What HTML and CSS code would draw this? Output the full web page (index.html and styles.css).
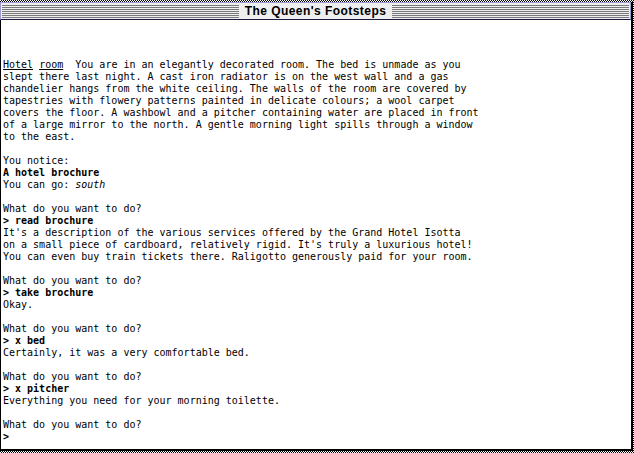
FILE: index.html
```html
<!DOCTYPE html>
<html>
<head>
<meta charset="utf-8">
<title>The Queen's Footsteps</title>
<link rel="stylesheet" href="styles.css">
</head>
<body>
<div class="window">
  <div class="titlebar">
    <div class="stripes"></div>
    <div class="title">The Queen's Footsteps</div>
    <div class="stripes"></div>
  </div>
  <div class="content">
    <div class="notch"></div>
    <pre class="transcript"><span class="u">Hotel</span> <span class="u">room</span>  You are in an elegantly decorated room. The bed is unmade as you
slept there last night. A cast iron radiator is on the west wall and a gas
chandelier hangs from the white ceiling. The walls of the room are covered by
tapestries with flowery patterns painted in delicate colours; a wool carpet
covers the floor. A washbowl and a pitcher containing water are placed in front
of a large mirror to the north. A gentle morning light spills through a window
to the east.

You notice:
<b>A hotel brochure</b>
You can go: <i>south</i>

What do you want to do?
<b>&gt; read brochure</b>
It's a description of the various services offered by the Grand Hotel Isotta
on a small piece of cardboard, relatively rigid. It's truly a luxurious hotel!
You can even buy train tickets there. Raligotto generously paid for your room.

What do you want to do?
<b>&gt; take brochure</b>
Okay.

What do you want to do?
<b>&gt; x bed</b>
Certainly, it was a very comfortable bed.

What do you want to do?
<b>&gt; x pitcher</b>
Everything you need for your morning toilette.

What do you want to do?
<b>&gt;</b></pre>
  </div>
</div>
</body>
</html>
```

FILE: styles.css
```css
html, body {
  margin: 0;
  padding: 0;
}
body {
  width: 634px;
  height: 453px;
  overflow: hidden;
  background: repeating-conic-gradient(#000 0 25%, #fff 0 50%) 0 0 / 2px 2px;
}
.window {
  margin-top: 2px;
  width: 631px;
  height: 449px;
  border-right: 2px solid #000;
  display: flex;
  flex-direction: column;
  background: #fff;
}
.titlebar {
  height: 16px;
  border: 1px solid #9c9cd0;
  border-bottom: 1px solid #1a1a40;
  background: #eeeeee;
  display: flex;
  align-items: center;
  padding: 0 1px;
}
.stripes {
  flex: 1;
  height: 13px;
  background: repeating-linear-gradient(to bottom, #7a7a7a 0 1px, transparent 1px 2px);
}
.title {
  padding: 0 6px;
  font-family: "Liberation Sans", Arial, sans-serif;
  font-weight: bold;
  font-size: 12px;
  line-height: 14px;
  color: #000;
  letter-spacing: 0.45px;
}
.content {
  position: relative;
  flex: 1;
  border-left: 1px solid #000;
  border-bottom: 2px solid #000;
  padding: 39px 2px 0 2px;
  overflow: hidden;
}
.notch {
  position: absolute;
  right: -3px;
  top: 17px;
  width: 3px;
  height: 8px;
  background: #000;
}
.transcript {
  margin: 0;
  font-family: "DejaVu Sans Mono", monospace;
  font-size: 10px;
  line-height: 12px;
  color: #000;
}
.u {
  text-decoration: underline;
}
```
